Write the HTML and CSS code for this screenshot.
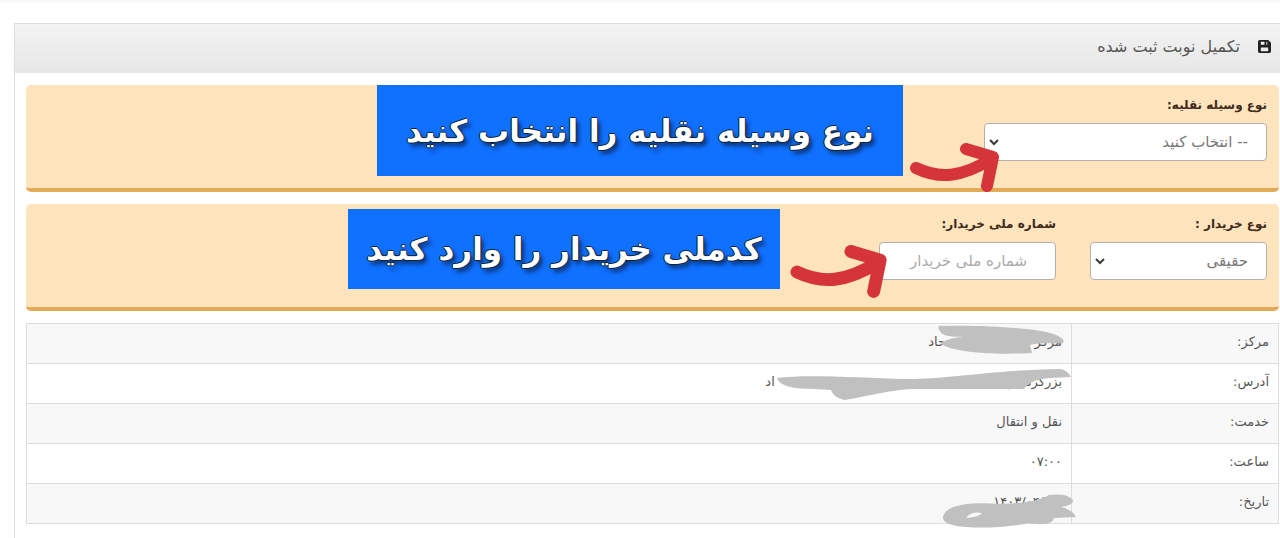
FILE: index.html
```html
<!DOCTYPE html>
<html lang="fa" dir="rtl">
<head>
<meta charset="utf-8">
<meta name="viewport" content="width=device-width, initial-scale=1">
<title>تکمیل نوبت ثبت شده</title>
<link rel="stylesheet" href="styles.css">
</head>
<body>
<svg class="defs" aria-hidden="true">
  <symbol id="arrow" viewBox="0 0 90 50">
    <path d="M7 25C30 36 52 35 82 16M57 6L84 14L78 43" fill="none" stroke="#d6343b" stroke-width="12" stroke-linecap="round" stroke-linejoin="round"/>
  </symbol>
  <symbol id="chevron" viewBox="0 0 10 8">
    <path d="M1 2L5 6L9 2" fill="none" stroke="#3c3c3c" stroke-width="2"/>
  </symbol>
</svg>
<main class="panel">
  <header class="panel-head">
    <svg class="save" viewBox="0 0 14 14" aria-hidden="true"><path fill="#222" fill-rule="evenodd" d="M2 0H11L14 3V12Q14 14 12 14H2Q0 14 0 12V2Q0 0 2 0ZM3 2V5H10V2ZM3 8V12H11V8ZM7 2H9V5H7Z"/></svg>
    <h1 class="title">تکمیل نوبت ثبت شده</h1>
  </header>
  <div class="panel-body">
    <section class="group">
      <div class="field wide">
        <label for="vehicle">نوع وسیله نقلیه:</label>
        <div class="control">
          <select id="vehicle"><option>-- انتخاب کنید</option></select>
          <svg class="chevron" aria-hidden="true"><use href="#chevron"/></svg>
        </div>
      </div>
      <p class="callout callout-vehicle">نوع وسیله نقلیه را انتخاب کنید</p>
      <svg class="arrow arrow-vehicle" aria-hidden="true"><use href="#arrow"/></svg>
    </section>
    <section class="group">
      <div class="field">
        <label for="buyer">نوع خریدار :</label>
        <div class="control">
          <select id="buyer"><option>حقیقی</option></select>
          <svg class="chevron" aria-hidden="true"><use href="#chevron"/></svg>
        </div>
      </div>
      <div class="field">
        <label for="national">شماره ملی خریدار:</label>
        <div class="control"><input id="national" type="text" placeholder="شماره ملی خریدار"></div>
      </div>
      <p class="callout callout-national">کدملی خریدار را وارد کنید</p>
      <svg class="arrow arrow-national" aria-hidden="true"><use href="#arrow"/></svg>
    </section>
    <table class="details">
      <tr><th scope="row">مرکز:</th><td><span class="masked masked-center"><span>مرکز ت</span><span>حاد</span></span>
        <svg class="scribble" viewBox="0 0 320 48" aria-hidden="true"><path d="M189 7C186 3 187 1 192 2C225 1 265 3 290 7C308 10 315 16 312 19C307 20 291 18 279 21L281 29C246 31 204 29 190 20C194 13 219 12 240 11C213 13 192 15 189 7Z"/></svg></td></tr>
      <tr><th scope="row">آدرس:</th><td><span class="masked masked-address"><span>بزرگره س</span><span>اد</span></span>
        <svg class="scribble" viewBox="0 0 320 48" aria-hidden="true"><path d="M26 14C55 10 110 14 155 15C200 15 240 6 310 5Q317 7 320 13L300 14Q280 15 273 25C235 25 190 25 160 25C125 28 107 35 93 36Q82 33 80 26C60 24 30 27 26 14Z"/></svg></td></tr>
      <tr><th scope="row">خدمت:</th><td>نقل و انتقال</td></tr>
      <tr><th scope="row">ساعت:</th><td>۰۷:۰۰</td></tr>
      <tr><th scope="row">تاریخ:</th><td><span class="date" dir="ltr">۱۴۰۳/۰۴/</span>
        <svg class="scribble" viewBox="0 0 320 48" aria-hidden="true"><path fill-rule="evenodd" d="M192 33C194 20 222 18 248 20C272 19 286 18 298 11Q316 9 322 16Q323 21 310 23Q322 26 325 33L303 34Q302 41 286 40L278 39C251 45 190 47 192 33ZM215 34Q220 27 231 29Q229 33 215 34Z"/></svg></td></tr>
    </table>
  </div>
</main>
</body>
</html>
```
FILE: styles.css
```css
* { box-sizing: border-box; }
body {
  margin: 0;
  padding: 23px 0 0 14px;
  background: linear-gradient(#f5f5f5, #fff 4px) no-repeat, #fff;
  color: #555;
  font: 13px/20px "DejaVu Sans", sans-serif;
  overflow-x: hidden;
}
.defs { display: none; }
.panel { border-left: 1px solid #ddd; min-height: calc(100vh - 23px); }
.panel-head {
  display: flex;
  align-items: center;
  gap: 18px;
  height: 50px;
  padding: 0 9px 4px;
  border-top: 1px solid #ddd;
  background: linear-gradient(#f3f3f3, #e7e7e7);
}
.save { width: 13px; height: 13px; }
.title { margin: 0; font-size: 16px; font-weight: 400; color: #555; }
.panel-body { padding: 12px 1px 16px 11px; }
.group {
  position: relative;
  display: flex;
  gap: 34px;
  height: 107px;
  margin-bottom: 12px;
  padding: 10px 12px;
  border-bottom: 4px solid #e3ab58;
  border-radius: 5px;
  background: #fee4bd;
}
.field { width: 177px; }
.field.wide { width: 23%; }
label { display: block; margin-bottom: 8px; font-size: 12px; font-weight: 700; color: #3f2a20; }
.control { position: relative; }
select, input {
  display: block;
  width: 100%;
  height: 38px;
  padding: 0 18px;
  border: 1px solid #b5b0aa;
  border-radius: 4px;
  background: #fff;
  color: #777;
  font: 15px/20px "DejaVu Sans", sans-serif;
  appearance: none;
}
input { padding: 0 28px; }
input::placeholder { color: #aaa; }
.chevron { position: absolute; left: 5px; top: 15px; width: 10px; height: 8px; pointer-events: none; }
.callout {
  position: absolute;
  display: flex;
  align-items: center;
  justify-content: center;
  margin: 0;
  background: #1070ff;
  color: #fff;
  font: 700 31px/48px "DejaVu Sans", sans-serif;
  white-space: nowrap;
  text-shadow: 1px 0 #123, -1px 0 #123, 0 1px #123, 0 -1px #123, 3px 4px 4px #0a3270;
}
.callout-vehicle { top: 0; right: 376px; width: 526px; height: 91px; }
.callout-national { top: 5px; right: 499px; width: 432px; height: 80px; }
.arrow { position: absolute; width: 90px; height: 50px; overflow: visible; }
.arrow-vehicle { top: 58px; right: 280px; }
.arrow-national { top: 41px; right: 392px; width: 98px; height: 54px; }
.details { width: 100%; border-collapse: collapse; }
.details th, .details td {
  height: 40px;
  padding: 0 9px 4px;
  border: 1px solid #ddd;
  font-weight: 400;
  text-align: right;
}
.details th { width: 207px; }
.details td { position: relative; }
.details tr:nth-child(odd) { background: #f8f8f8; }
.masked { display: flex; }
.masked-center { gap: 72px; }
.masked-address { gap: 230px; }
.date { display: inline-block; margin-right: 18px; }
.scribble { position: absolute; top: 0; right: 0; width: 320px; height: 48px; fill: #c0c0c0; overflow: visible; z-index: 1; }
```
